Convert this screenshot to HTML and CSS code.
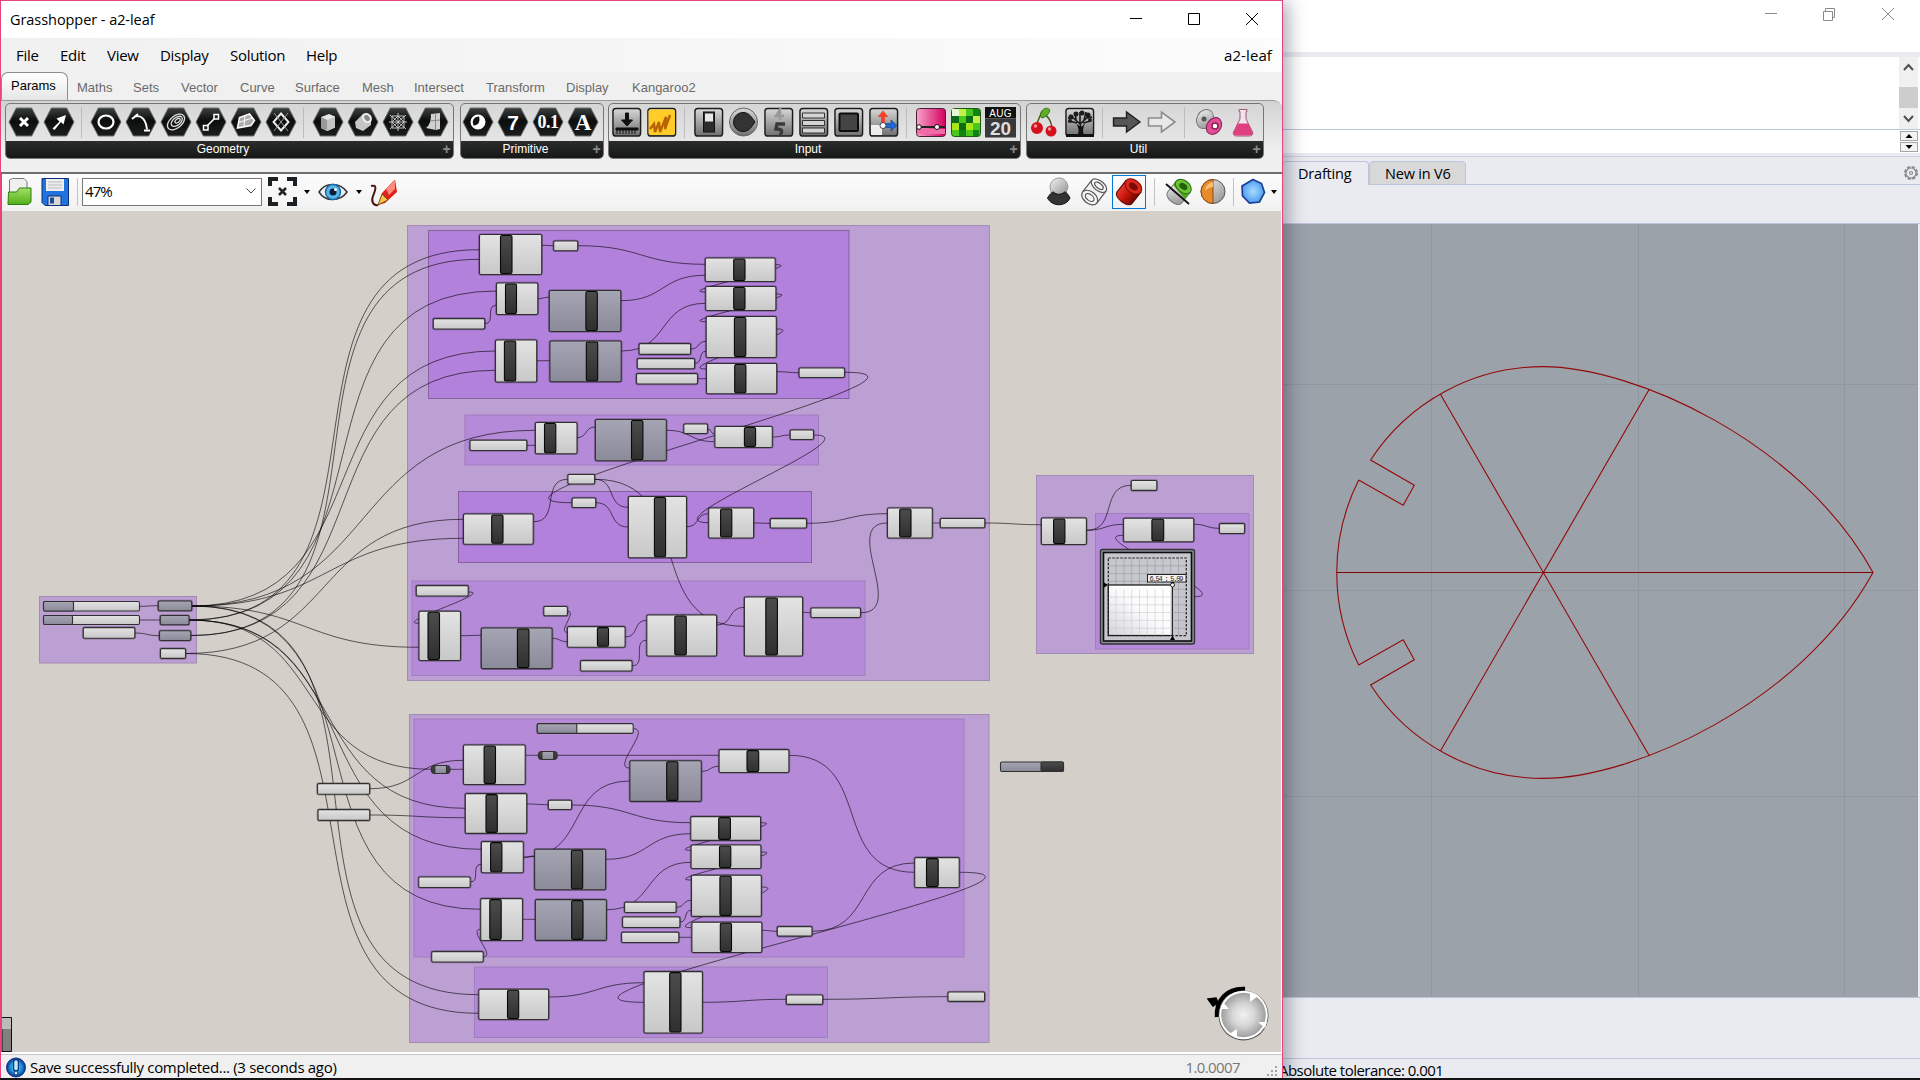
FILE: index.html
```html
<!DOCTYPE html>
<html lang="en">
<head>
<meta charset="utf-8">
<title>Grasshopper - a2-leaf</title>
<link rel="stylesheet" href="styles.css">
</head>
<body>
<svg class="defs" width="0" height="0" aria-hidden="true">
  <defs>
    <linearGradient id="light" x1="0" y1="0" x2="0" y2="1"><stop offset="0" stop-color="#e3e3e3"/><stop offset="1" stop-color="#c8c8c8"/></linearGradient>
    <linearGradient id="gray" x1="0" y1="0" x2="0" y2="1"><stop offset="0" stop-color="#a6a5b4"/><stop offset="1" stop-color="#8b8a99"/></linearGradient>
    <linearGradient id="dark" x1="0" y1="0" x2="0" y2="1"><stop offset="0" stop-color="#4c4c4c"/><stop offset="1" stop-color="#2f2f2f"/></linearGradient>
    <linearGradient id="hexfill" x1="0" y1="0" x2="0" y2="1"><stop offset="0" stop-color="#3c4040"/><stop offset=".45" stop-color="#0c0d0d"/><stop offset="1" stop-color="#1c1e1e"/></linearGradient>
    <linearGradient id="tile" x1="0" y1="0" x2="0" y2="1"><stop offset="0" stop-color="#d8d8d8"/><stop offset="1" stop-color="#6f6f6f"/></linearGradient>
    <linearGradient id="pad" x1="0" y1="1" x2="1" y2="0"><stop offset="0" stop-color="#d4d4da"/><stop offset=".5" stop-color="#fbfbfc"/><stop offset="1" stop-color="#ffffff"/></linearGradient>
    <linearGradient id="steel" x1="0" y1="0" x2="1" y2="1"><stop offset="0" stop-color="#f4f4f4"/><stop offset="1" stop-color="#8d8d8d"/></linearGradient>
    <linearGradient id="magenta" x1="0" y1="0" x2="1" y2="0"><stop offset="0" stop-color="#f7a3cb"/><stop offset="1" stop-color="#d4005f"/></linearGradient>
    <linearGradient id="green" x1="0" y1="0" x2="0" y2="1"><stop offset="0" stop-color="#a5e066"/><stop offset="1" stop-color="#4fae1a"/></linearGradient>
    <linearGradient id="red" x1="0" y1="0" x2="1" y2="0"><stop offset="0" stop-color="#e43a2c"/><stop offset=".5" stop-color="#c61208"/><stop offset="1" stop-color="#6d0602"/></linearGradient>
    <radialGradient id="knob"><stop offset="0" stop-color="#f1f1f1"/><stop offset=".5" stop-color="#d6d6d6"/><stop offset="1" stop-color="#9f9f9f"/></radialGradient>
    <radialGradient id="gem"><stop offset="0" stop-color="#a9dcff"/><stop offset="1" stop-color="#4f9cf0"/></radialGradient>
    <radialGradient id="info"><stop offset="0" stop-color="#49d6f4"/><stop offset=".6" stop-color="#1f8fd8"/><stop offset="1" stop-color="#0c2f8e"/></radialGradient>
    <symbol id="hex" viewBox="0 0 32 30"><path d="M8.300 1h15.400L31 15l-7.300 14H8.300L1 15z" fill="url(#hexfill)" stroke="#6a6e6e"/></symbol>
    <symbol id="tilebox" viewBox="0 0 32 32"><rect x="1.500" y="1.500" width="28.500" height="28.500" rx="3" fill="url(#tile)" stroke="#1c1c1c" stroke-width="1.500"/></symbol>
  </defs>
</svg>

<div class="desktop">
  <section class="rhino">
    <header class="rhino-title">
      <svg width="160" height="28" fill="none" stroke="#8a8a8a"><path d="M5 13.500h12M63.500 11.500h9v9h-9zM65.500 11v-2.500h9v9H73M122 8l12 12M134 8l-12 12"/></svg>
    </header>
    <div class="rhino-history">
      <div class="scrollbar">
        <svg width="19" height="30" fill="none" stroke="#505050" stroke-width="2"><path d="M5 13l4.500-5 4.500 5"/></svg>
        <div class="thumb"></div>
        <svg width="19" height="21" fill="none" stroke="#505050" stroke-width="2"><path d="M5 8l4.500 5 4.500-5"/></svg>
      </div>
    </div>
    <div class="rhino-prompt">
      <div class="spin"><svg width="18" height="10"><path d="M8 2l3.500 4h-7z"/></svg><svg width="18" height="10"><path d="M8 6l3.500-4h-7z"/></svg></div>
    </div>
    <nav class="rhino-tabs">
      <span class="rtab rtab-on">Drafting</span><span class="rtab">New in V6</span>
      <svg class="gear" width="16" height="16" fill="none" stroke="#8b8b8b" stroke-width="1.200"><circle cx="8" cy="8" r="6" stroke-dasharray="3.200 1.500" stroke-width="2"/><circle cx="8" cy="8" r="5"/><circle cx="8" cy="8" r="1.500"/></svg>
    </nav>
    <div class="rhino-tools"></div>
    <div class="viewport">
      <svg width="636" height="773" viewBox="1283 224 636 773" fill="none">
        <path d="M1431.500 224v773M1638.500 224v773M1844.500 224v773M1283 384.500h636M1283 590.500h636M1283 796.500h636" stroke="#9097a0"/>
        <g stroke="#920a0a" stroke-width="1.100">
          <path d="M1440.400 394.300L1649.400 756M1649.400 389L1440.400 751"/>
          <path d="M1358.700 480l44.500 25.300 11.100-20-43.700-25.300A206 206 0 0 1 1543 366.600C1632 366.600 1800 440 1873 572.500C1800 705 1632 778.400 1543 778.400A206 206 0 0 1 1370.600 685l43.700-25.300-11.100-20-44.500 25.300A206 206 0 0 1 1358.700 480"/>
        </g>
        <path d="M1336.500 572.500h206" stroke="#7d0606"/><path d="M1542.500 572.500h330.500" stroke="#7d0606"/>
      </svg>
    </div>
    <div class="rhino-pane"></div>
    <footer class="rhino-status"><span>Absolute tolerance: 0.001</span></footer>
  </section>

  <section class="gh">
    <header class="gh-title"><span class="caption">Grasshopper - a2-leaf</span>
      <svg width="158" height="36" fill="none" stroke="#000"><path d="M6 17.500h12M64.500 12.500h11v11h-11zM122 12l12 12M134 12l-12 12"/></svg>
    </header>
    <nav class="menu"><span class="m1">File</span><span class="m2">Edit</span><span class="m3">View</span><span class="m4">Display</span><span class="m5">Solution</span><span>Help</span><span class="doc">a2-leaf</span></nav>
    <nav class="tabs"><span class="tab-on">Params</span><span class="t1">Maths</span><span class="t2">Sets</span><span class="t3">Vector</span><span class="t4">Curve</span><span class="t5">Surface</span><span class="t6">Mesh</span><span class="t7">Intersect</span><span class="t8">Transform</span><span class="t9">Display</span><span>Kangaroo2</span></nav>
    <div class="ribbon">
      <div class="panel p-geo"><div class="icons">
        <svg class="ic"><use href="#hex" width="32" height="30"/><path d="M12 11l8 8M20 11l-8 8" stroke="#fff" stroke-width="3"/></svg>
        <svg class="ic"><use href="#hex" width="32" height="30"/><path d="M9.500 21.500l7-7-3-3L23 8l-2.500 9.500-2.500-2.500-6.500 8z" fill="#fff"/></svg>
        <i class="sep"></i>
        <svg class="ic"><use href="#hex" width="32" height="30"/><ellipse cx="16" cy="15" rx="7.500" ry="6.500" fill="none" stroke="#fff" stroke-width="2.200"/></svg>
        <svg class="ic"><use href="#hex" width="32" height="30"/><path d="M10 9.500c7-2 11 4 12 13" fill="none" stroke="#fff" stroke-width="1.900"/><path d="M7 12l6-5M19 23.500h6" stroke="#fff" stroke-width="1.900"/></svg>
        <svg class="ic"><use href="#hex" width="32" height="30"/><g fill="none" stroke="#ddd" stroke-width="1.300" transform="rotate(-40 16 15)"><ellipse cx="16" cy="15" rx="10" ry="6"/><ellipse cx="17" cy="15" rx="6.500" ry="3.800"/><ellipse cx="18" cy="15" rx="3" ry="1.700"/></g></svg>
        <svg class="ic"><use href="#hex" width="32" height="30"/><path d="M11 20L21 10" stroke="#fff" stroke-width="1.600"/><path d="M8.500 18.500h4.500v4.500H8.500zM19 7.500h4.500v4.500h-4.500z" fill="#222" stroke="#fff" stroke-width="1.500"/></svg>
        <svg class="ic"><use href="#hex" width="32" height="30"/><path d="M7.500 21l2-10.500 10-3.500 5 6.500-3.500 5z" fill="#aaa" stroke="#fff" stroke-width="1.500"/><path d="M9 15.500l13-4.500M15 9l-1 10" stroke="#fff"/></svg>
        <svg class="ic"><use href="#hex" width="32" height="30"/><path d="M16 6.500l7.500 8.500-7.500 8.500L8.500 15z" fill="none" stroke="#eee" stroke-width="1.900"/><path d="M9 6l14 18M23 6L9 24" stroke="#999"/></svg>
        <i class="sep"></i>
        <svg class="ic"><use href="#hex" width="32" height="30"/><path d="M9 10l8-3 6 2.500v11L15 24l-6-3z" fill="#e6e6e6"/><path d="M9 10l6.500 3v11l-6.500-3z" fill="#999"/><path d="M15.500 13l7.500-3.500v11L15.500 24z" fill="#c4c4c4"/></svg>
        <svg class="ic"><use href="#hex" width="32" height="30"/><path d="M8 15l8-8 8 5v6l-8 6-7-3z" fill="#c6c6c6"/><ellipse cx="20" cy="11" rx="4.500" ry="5.500" fill="#eee" transform="rotate(-40 20 11)"/><ellipse cx="20" cy="11" rx="2.500" ry="3.300" fill="#888" transform="rotate(-40 20 11)"/></svg>
        <svg class="ic"><use href="#hex" width="32" height="30"/><path d="M8 8l16 14M24 8L8 22M16 6v18M7 15h18M10 9h12v12H10zM16 9l6 6-6 6-6-6z" fill="none" stroke="#c4c4c4"/></svg>
        <svg class="ic"><use href="#hex" width="32" height="30"/><path d="M14 7l9-1v16l-4 1-10-2c4-3 5-8 5-14z" fill="#d0d0d0"/><path d="M18.500 6.500V23M13 14l10-1" stroke="#888"/></svg>
      </div><div class="plabel"><span>Geometry</span><b>+</b></div></div>
      <div class="panel p-prim"><div class="icons">
        <svg class="ic"><use href="#hex" width="32" height="30"/><circle cx="16" cy="15" r="6.500" fill="#fff" stroke="#fff" stroke-width="2"/><path d="M17 9.500a6 6 0 0 0-5.500 9c5 0 7-4 5.500-9z" fill="#111"/></svg>
        <svg class="ic"><use href="#hex" width="32" height="30"/><text x="16" y="22.500" class="glyph g7">7</text></svg>
        <svg class="ic"><use href="#hex" width="32" height="30"/><text x="16" y="21" class="glyph g01">0.1</text></svg>
        <svg class="ic"><use href="#hex" width="32" height="30"/><text x="16" y="22.500" class="glyph gA">A</text></svg>
      </div><div class="plabel"><span>Primitive</span><b>+</b></div></div>
      <div class="panel p-input"><div class="icons">
        <svg class="ic"><use href="#tilebox" width="32" height="31"/><path d="M14.500 6h3v7h4L16 19l-5.500-6h4zM5 21h22v2H5zM6 23v4M9 23v4M12 23v4M15 23v4M18 23v4M21 23v4M24 23v4" fill="#111" stroke="#111"/></svg>
        <svg class="ic"><use href="#tilebox" width="32" height="31"/><rect x="2.500" y="2.500" width="26.500" height="25.500" rx="2" fill="#ffcc2a"/><path d="M4 22l4-5 1 8 4-10 1 10 6-15-1 12 5-14" fill="none" stroke="#b86200" stroke-width="2.400"/></svg>
        <i class="sep"></i>
        <svg class="ic"><use href="#tilebox" width="32" height="31"/><rect x="10.500" y="5" width="11" height="20" fill="#2c2c2c" stroke="#111"/><rect x="12" y="6.500" width="8" height="8" fill="#e8e8e8"/></svg>
        <svg class="ic"><circle cx="15.500" cy="15" r="14" fill="url(#tile)" stroke="#666"/><path d="M15 5.500c6 0 8 4 12 9.500-4 5.500-6 9.500-12 9.500a9.500 9.500 0 0 1 0-19z" fill="#333" stroke="#111"/></svg>
        <svg class="ic"><use href="#tilebox" width="32" height="31"/><path d="M18 1l-5 8h8M17 4v9" fill="none" stroke="#999" stroke-width="2.500"/><path d="M22 17h-8l-1 5c6 0 7 1 4 7" fill="none" stroke="#3a3a3a" stroke-width="3.400"/></svg>
        <svg class="ic"><use href="#tilebox" width="32" height="31"/><path d="M4.500 6h22v5h-22zM4.500 13.500h22v5h-22zM4.500 21h22v5h-22z" fill="#d4d4d4" stroke="#333"/></svg>
        <svg class="ic"><use href="#tilebox" width="32" height="31"/><rect x="6.500" y="6.500" width="18.500" height="17.500" rx="1" fill="#444" stroke="#0c0c0c" stroke-width="2"/></svg>
        <svg class="ic"><use href="#tilebox" width="32" height="31"/><path d="M3 18h11v10H3z" fill="#eee"/><path d="M13 17V10H9.500L15 3.500 20.500 10H17v7z" fill="#f0442c"/><path d="M16 16.500h7V13l6 5.500-6 5.500v-3.500h-7z" fill="#1c68d4" stroke="#113c88" stroke-width=".6"/><circle cx="15" cy="18.500" r="3" fill="#fff" stroke="#444"/></svg>
        <i class="sep"></i>
        <svg class="ic"><rect x="1.500" y="1.500" width="29" height="28" rx="3" fill="url(#magenta)" stroke="#4a2038"/><path d="M2 20h28" stroke="#222" stroke-width="2"/><path d="M2 22h28v5H2z" fill="#f06aa8"/><circle cx="4" cy="20" r="2.300" fill="#fff" stroke="#111"/><circle cx="22" cy="20" r="2.500" fill="#fff" stroke="#111"/></svg>
        <svg class="ic"><rect x="1.500" y="1.500" width="29" height="28" rx="3" fill="#49c81c" stroke="#1d5a10"/><path d="M2 9h7v7H2zM16 9h7v7h-7zM9 16h7v7H9z" fill="#0b6b16"/><path d="M9 2h7v7H9zM23 9h7v7h-7z" fill="#c4f04a"/><path d="M16 16h7v7h-7zM2 16h7v7H2z" fill="#a6e813"/><path d="M23 2h7v7h-7zM23 23h6v6h-6zM9 23h7v6H9z" fill="#118312"/><path d="M2 2h7v7H2z" fill="#e6f7d4"/></svg>
        <svg class="ic"><rect x="0" y="0" width="31" height="11.500" fill="#111"/><rect x="0" y="11.500" width="31" height="19" fill="#393939"/><text x="15.500" y="9.500" class="glyph gaug">AUG</text><text x="15.500" y="27.800" class="glyph g20">20</text></svg>
      </div><div class="plabel"><span>Input</span><b>+</b></div></div>
      <div class="panel p-util"><div class="icons">
        <svg class="ic"><path d="M13 4c-2 6-4 9-6 15M13 4c4 5 9 7 10 17" fill="none" stroke="#4a5a1a" stroke-width="1.500"/><path d="M13 4c2-4 7-3 8-1-1 4-4 7-8 8-3-2-1-5 0-7z" fill="#5fae28" stroke="#2d6a10" stroke-width=".8"/><circle cx="8" cy="21" r="6" fill="#d5121c"/><circle cx="22" cy="24" r="5.500" fill="#d5121c"/><circle cx="6.500" cy="19" r="1.800" fill="#ff8f8f"/><circle cx="20.500" cy="22" r="1.700" fill="#ff8f8f"/></svg>
        <svg class="ic"><use href="#tilebox" width="32" height="31"/><path d="M13.500 29c2-5 1-8-1-12l3 2 1-4 1 5 4-4c-3 5-3 9-1 13z" fill="#111"/><path d="M16 17L6 8M16 17l10-9M16 17V5M13 16l-8-2M19 16l8-2M12 13l-1-8M20 13l2-8M9 11l-5 0M23 11l5-1" stroke="#1a1a1a" stroke-width="1.600"/><g fill="#1d1d1d"><circle cx="7" cy="10" r="2.500"/><circle cx="12" cy="7" r="2.500"/><circle cx="18" cy="6" r="2.500"/><circle cx="24" cy="8" r="2.500"/><circle cx="26" cy="13" r="2"/><circle cx="6" cy="14" r="2"/></g><path d="M2 27h28v3H2z" fill="#111"/></svg>
        <i class="sep"></i>
        <svg class="ic"><path d="M2.500 11h13V5L29 15 15.500 25v-6h-13z" fill="#565656" stroke="#222" stroke-width="1.400"/></svg>
        <svg class="ic"><path d="M2.500 11h13V5L29 15 15.500 25v-6h-13z" fill="#e8e8e8" stroke="#8b8b8b" stroke-width="1.600"/></svg>
        <i class="sep"></i>
        <svg class="ic"><ellipse cx="12" cy="12" rx="8" ry="10" fill="url(#steel)" stroke="#777" transform="rotate(30 12 12)"/><circle cx="11" cy="12" r="2.500" fill="#555"/><ellipse cx="21" cy="19" rx="7" ry="9" fill="#e24b96" stroke="#86204f" transform="rotate(35 21 19)"/><circle cx="22" cy="19" r="3" fill="#fff" stroke="#86204f" stroke-width="1.500"/></svg>
        <svg class="ic"><path d="M11 2.500h8v2h-1V12l6.500 13c1 3-1 4-3 4h-13c-2 0-4-1-3-4L12 12V4.500h-1z" fill="#f3e4ec" stroke="#9b5878"/><path d="M9.500 16.500h11l4 9c.500 2-1 3-2.500 3H8c-1.500 0-3-1-2.500-3z" fill="#e0407f"/></svg>
      </div><div class="plabel"><span>Util</span><b>+</b></div></div>
    </div>
    <div class="toolbar">
      <svg class="tl-open" width="26" height="30"><path d="M2.500 3l3-1.500H17l3 3V17H2.500z" fill="#f0f0f0" stroke="#777"/><path d="M1 27.500L1.500 15h8l3-4h11.500v14l-3 2.500z" fill="url(#green)" stroke="#2f7a12"/></svg>
      <svg class="tl-save" width="28" height="30"><path d="M1 1.500h26.500v27H4l-3-3z" fill="#1e74dc" stroke="#0d2f7a"/><path d="M5 2h18v12H5z" fill="#eee"/><path d="M7 5h14M7 8h14M7 11h14" stroke="#bbb"/><path d="M7 19h13v9.500H7z" fill="#d7d7d7" stroke="#0d2f7a"/><path d="M9 20.500h4v6H9z" fill="#1b4c9c"/></svg>
      <i class="tsep ts1"></i>
      <div class="combo"><span>47%</span><svg width="12" height="10" fill="none" stroke="#444"><path d="M1.500 2.500L6 7l4.500-4.500"/></svg></div>
      <svg class="tl-ext" width="29" height="29"><path d="M2 9V2h8M19 2h8v7M27 20v7h-8M10 27H2v-7" fill="none" stroke="#1b2023" stroke-width="4"/><path d="M11 11l7 7M18 11l-7 7" stroke="#222" stroke-width="2.500"/></svg>
      <svg class="tl-a1" width="6" height="4"><path d="M0 0h6L3 4z"/></svg>
      <svg class="tl-eye" width="30" height="22"><path d="M1 11C7 1 22 1 29 11 22 21 7 21 1 11z" fill="#e9f1f5" stroke="#333" stroke-width="1.500"/><circle cx="15" cy="11" r="7.500" fill="#58b5ea" stroke="#1b6aa8" stroke-width="1.500"/><circle cx="15" cy="11" r="3.500" fill="#0c1c3c"/><circle cx="17.500" cy="8.500" r="1.500" fill="#fff"/></svg>
      <svg class="tl-a2" width="6" height="4"><path d="M0 0h6L3 4z"/></svg>
      <svg class="tl-pen" width="30" height="30"><path d="M2 9c7-2 4 5 2 10s0 10 5 9" fill="none" stroke="#4a1712" stroke-width="2"/><path d="M9 28l4-12L26 2.500l2 12.500-12 11z" fill="#e2231c"/><path d="M17 12l9-9 0 9-6 6z" fill="#ff8a7d"/><path d="M9 28l4-11 6 6z" fill="#f1c64a" stroke="#6b3a08" stroke-width=".8"/></svg>
      <div class="push"></div>
      <svg class="tr" width="30" height="30"><path d="M6 10c1-12 17-12 18 0l-3 9H8z" fill="url(#steel)" stroke="#999"/><path d="M3.500 21c3-5 5-6 6-6 3 3 8 3 11 0 2 0 4 3 5.500 6-4 9-18 9-22.500 0z" fill="#333" stroke="#111"/></svg>
      <svg class="tr" width="34" height="30"><g transform="rotate(38 17 15)" fill="#f4f4f4" stroke="#555" stroke-width="1.200"><path d="M8 8h18v14H8z" stroke="none"/><path d="M8 7v15M26 7v15"/><ellipse cx="17" cy="7" rx="9" ry="5"/><ellipse cx="17" cy="7" rx="5" ry="2.500"/><ellipse cx="17" cy="22" rx="9" ry="6"/><ellipse cx="17" cy="22" rx="5" ry="3"/></g></svg>
      <div class="picked"><svg width="32" height="32"><g transform="rotate(38 16 16)"><path d="M6.500 9v14c0 7 19 7 19 0V9z" fill="url(#red)" stroke="#5f0702"/><ellipse cx="16" cy="9" rx="9.500" ry="6.500" fill="#d9281d" stroke="#7d0a04"/><ellipse cx="16" cy="9" rx="5" ry="3.300" fill="#7d0a04"/></g></svg></div>
      <i class="tsep ts2"></i>
      <svg class="tr tr-g" width="32" height="30"><g transform="rotate(38 16 15)"><path d="M7 8v14c0 7 18 7 18 0V8z" fill="url(#steel)" stroke="#777"/><path d="M7 8v5l18 4V8z" fill="#4aa51c"/><ellipse cx="16" cy="8" rx="9" ry="6" fill="#69c433" stroke="#2a6d0b"/><ellipse cx="16" cy="8" rx="4.500" ry="3" fill="#255f0a"/></g><path d="M3 7l23 20" stroke="#111" stroke-width="1.800"/></svg>
      <svg class="tr tr-o" width="28" height="30"><circle cx="14" cy="14.500" r="12" fill="url(#steel)" stroke="#555"/><path d="M14 2.500a12 12 0 0 0 0 24z" fill="#e8892a" stroke="#8f4a08"/><path d="M14 5a9 9 0 0 0-8 9c3-3 5-4 8-4z" fill="#f8c07c"/></svg>
      <i class="tsep ts3"></i>
      <svg class="tr tr-b" width="26" height="28"><path d="M13 1.500l8.500 4 3 9-5 9.500-10 1L2.500 18 2 8z" fill="url(#gem)" stroke="#1c3f94" stroke-width="1.700"/></svg>
      <svg class="tl-a3" width="6" height="4"><path d="M0 0h6L3 4z"/></svg>
    </div>
    <div class="canvas">
      <svg id="graph" width="1278" height="841" viewBox="2 211 1278 841">
        <g id="groups"></g><g id="wires"></g><g id="nodes"></g>
        <g class="slider2d">
          <rect x="1100.500" y="549.500" width="94" height="94.500" rx="2" fill="#8f8e9c" stroke="#333" stroke-width="1.400"/>
          <rect x="1103.500" y="552.500" width="88" height="88.500" fill="#c6c6cd" stroke="#0c0c0c" stroke-width="1.600"/>
          <path id="grid" stroke="#a3a3ac" stroke-width=".8"/>
          <rect x="1108.300" y="585" width="64" height="50.500" fill="url(#pad)" stroke="#111" stroke-width="1.200"/>
          <path id="grid2" stroke="#c9c9d2" stroke-width=".6"/>
          <rect x="1108.300" y="558" width="78" height="77.600" fill="none" stroke="#222" stroke-width="1.200" stroke-dasharray="2.500 1.500"/>
          <path d="M1104 582.500l4 2.500-4 2.500zM1170 640l2.500-4.500 2.500 4.500zM1170 581l2.500 4 2.500-4z" fill="#000"/>
          <rect x="1147.500" y="574.500" width="38.500" height="7.500" fill="#f2f2f2" stroke="#222"/>
          <text x="1149.500" y="580.600" class="coord" textLength="34">6.54 ; 5.09</text>
          <circle cx="1172.500" cy="585" r="2" fill="#fff" stroke="#222"/>
        </g>
        <path d="M2 1017.500h9.500v34H2z" fill="#808080" stroke="#111"/><path d="M2 1018h9v11H2z" fill="#bbb"/>
        <path d="M1217 1017c-1-17 10-29 28-28" fill="none" stroke="#000" stroke-width="4.500"/>
        <path d="M1208 999l8-1 2 5-5 3z" fill="#000" stroke="#000" stroke-width="1.500"/>
        <circle cx="1243.500" cy="1015.500" r="25" fill="#555"/><circle cx="1243.500" cy="1015" r="24.300" fill="#fff"/><circle cx="1243.500" cy="1015" r="22.300" fill="url(#knob)"/>
        <path d="M1250 992v10l8-6zM1223 1002l6 7-7 0zM1265 1028l-7-6h9zM1237 1037v-8l-8 5z" fill="#fff"/>
      </svg>
    </div>
    <footer class="gh-status">
      <svg width="20" height="21"><circle cx="10" cy="10.500" r="9.500" fill="url(#info)" stroke="#10317f"/><path d="M10 5v6.500" stroke="#10327a" stroke-width="6" stroke-linecap="round"/><path d="M10 5v6.500" stroke="#bfeaf6" stroke-width="3.500" stroke-linecap="round"/><circle cx="10" cy="16" r="2" fill="#bfeaf6" stroke="#10327a"/></svg>
      <span class="msg">Save successfully completed... (3 seconds ago)</span>
      <span class="ver">1.0.0007</span>
      <svg class="grip" width="12" height="12" fill="#a5a5a5"><path d="M8 0h2v2H8zM4 4h2v2H4zM8 4h2v2H8zM0 8h2v2H0zM4 8h2v2H4zM8 8h2v2H8z"/></svg>
    </footer>
  </section>
  <div class="taskbar"></div>
</div>
<script src="graph.js"></script>
</body>
</html>
```
FILE: styles.css
```css
* { box-sizing: border-box; }
body { margin: 0; width: 1920px; height: 1080px; overflow: hidden; background: #e9ebf0; color: #000; font-family: "Open Sans", "Noto Sans", sans-serif; font-size: 15px; }
svg { display: block; flex: none; }
.defs { position: absolute; }
.desktop { display: grid; grid-template-columns: 1283px 637px; grid-template-rows: 1078px 2px; height: 1080px; }
.rhino { grid-column: 2; grid-row: 1; display: flex; flex-direction: column; background: #e9ebf0; }
.gh { grid-column: 1; grid-row: 1; display: flex; flex-direction: column; border: 1px solid #e8447c; border-bottom: 0; background: #f0f0f0; z-index: 1; box-shadow: 4px 2px 18px rgba(20,20,50,.4); }
.taskbar { grid-column: 1 / 3; grid-row: 2; background: #141414; z-index: 2; }

/* Rhino window */
.rhino-title { height: 52px; background: #fff; display: flex; justify-content: flex-end; }
.rhino-history { height: 78px; border-top: 5px solid #e9ebf0; border-bottom: 1px solid #bdc5da; background: #fff; display: flex; justify-content: flex-end; padding-right: 2px; }
.scrollbar { width: 19px; background: #f0f0f0; }
.thumb { height: 21px; background: #cdcdcd; }
.rhino-prompt { height: 23px; background: #fff; display: flex; justify-content: flex-end; padding: 1px 2px 0 0; }
.spin { display: flex; flex-direction: column; gap: 1px; }
.spin svg { border: 1px solid #a5a5a5; background: #f3f3f3; }
.rhino-tabs { height: 32px; display: flex; align-items: flex-end; border-top: 3px solid #e9ebf0; box-shadow: inset 0 1px #cdd3e2, inset 0 -1px #bdc5da; }
.rtab { height: 24px; width: 97px; padding-left: 15px; font-size: 14.500px; letter-spacing: -.2px; line-height: 23px; background: #d8d8d8; border: 1px solid #bdc5da; border-radius: 4px 4px 0 0; white-space: nowrap; }
.rtab-on { width: 86px; background: #e9ebf0; border-bottom-color: #e9ebf0; border-left: 0; }
.gear { margin: 0 1px 4px auto; }
.rhino-tools { height: 39px; border-bottom: 1px solid #bdc5da; }
.viewport { height: 773px; width: 635px; background: #9ca2aa; overflow: hidden; }
.rhino-pane { height: 62px; border-top: 1px solid #bdc5da; border-bottom: 1px solid #bdc5da; }
.rhino-status { flex: 1; line-height: 23px; height: 19px; white-space: nowrap; letter-spacing: -.52px; }
.rhino-status span { margin-left: -4px; }

/* Grasshopper window */
.gh-title { height: 37px; background: #fff; display: flex; justify-content: space-between; align-items: flex-start; }
.caption { padding-left: 9px; line-height: 37px; font-size: 14.500px; letter-spacing: -.06px; }
.menu { height: 34px; display: flex; line-height: 35px; padding: 0 10px 0 15px; letter-spacing: -.3px; background: linear-gradient(90deg, #f0f0f0, #fcfcfc); }
.m1 { width: 44px; } .m2 { width: 47px; } .m3 { width: 53px; } .m4 { width: 70px; } .m5 { width: 76px; }
.doc { margin-left: auto; letter-spacing: .1px; }
.tabs { height: 28px; display: flex; align-items: flex-end; font: 13px "Liberation Sans", Arial, sans-serif; color: #6a6a6a; line-height: 24px; }
.tab-on { width: 67px; height: 28px; margin-right: 9px; padding-left: 9px; color: #000; line-height: 26px; background: linear-gradient(#fff, #e6e6e6); border: 1px solid #8d8d8d; border-bottom: 0; border-radius: 7px 7px 0 0; }
.t1 { width: 56px; } .t2 { width: 48px; } .t3 { width: 59px; } .t4 { width: 55px; } .t5 { width: 67px; } .t6 { width: 52px; } .t7 { width: 72px; } .t8 { width: 80px; } .t9 { width: 66px; }
.ribbon { height: 74px; padding: 2px 0 0 4px; display: flex; align-items: flex-start; border-top: 1px solid #9a9a9a; border-bottom: 2px solid #6f6f6f; border-top-right-radius: 9px; background: linear-gradient(#d3d3d3, #efefef 70%); }
.panel { height: 56px; border: 1px solid #777; border-radius: 5px; background: linear-gradient(#d6d6d6, #ececec); overflow: hidden; }
.p-geo { width: 449px; margin-right: 6px; } .p-prim { width: 144px; margin-right: 4px; } .p-input { width: 413px; margin-right: 5px; } .p-util { width: 238px; }
.icons { height: 37px; padding: 3px 0 0 1px; display: flex; }
.ic { width: 32px; height: 31px; margin-right: 3px; }
.ic:first-child { margin-left: 1px; }
.p-prim .ic:first-child { margin-left: 0; }
.sep { width: 1px; height: 31px; margin: 0 8px 0 3px; background: #bdbdbd; }
.plabel { height: 18px; display: flex; background: linear-gradient(#2b2d2d, #151616); color: #fff; font: 12px/16px "Liberation Sans", Arial, sans-serif; text-align: center; }
.plabel span { flex: 1; }
.plabel b { color: #8b8b8b; width: 13px; font-size: 14px; }
.glyph { fill: #fff; text-anchor: middle; font-weight: bold; font-family: "Liberation Serif", serif; }
.g7 { font-size: 21px; font-family: "Liberation Sans", sans-serif; } .g01 { font-size: 18px; letter-spacing: -.5px; } .gA { font-size: 23px; }
.gaug { font: 10px "Liberation Sans", sans-serif; letter-spacing: .3px; } .g20 { font: bold 19px "Liberation Sans", sans-serif; fill: #ddd; }
.toolbar { height: 37px; display: flex; align-items: center; padding: 0 0 2px 5px; background: linear-gradient(#fcfcfc, #f1f1f1); border-left: 1px solid #777; }
.tl-save { margin-left: 8px; } .tsep { width: 1px; height: 28px; background: #c2c2c2; } .ts1 { margin: 0 4px 0 8px; }
.combo { width: 180px; height: 28px; border: 1px solid #777; background: #fff; display: flex; align-items: center; justify-content: space-between; padding: 0 4px 1px 2px; letter-spacing: -.9px; }
.tl-ext { margin-left: 6px; } .tl-a1 { margin-left: 7px; } .tl-eye { margin-left: 8px; } .tl-a2 { margin-left: 8px; } .tl-pen { margin-left: 7px; }
.push { flex: 1; }
.picked { width: 34px; height: 34px; border: 1px solid #0078d7; margin-left: 1px; }
.tr { margin-left: 3px; }
.ts2 { margin: 0 5px 0 8px; } .tr-o { margin-left: 4px; } .ts3 { margin: 0 3px 0 6px; } .tl-a3 { margin: 0 5px 0 5px; }
.canvas { height: 841px; background: #d4cfc8; border-left: 1px solid #777; border-right: 1px solid #f8f8f8; overflow: hidden; }
.gh-status { flex: 1; display: flex; align-items: center; border-top: 2px solid #fff; box-shadow: inset 0 1px #c8c8c8; padding: 2px 3px 0 5px; white-space: nowrap; }
.msg { margin-left: 4px; letter-spacing: -.32px; }
.ver { margin-left: auto; margin-right: 27px; color: #777; letter-spacing: -.6px; }
.grip { margin-top: 10px; }

/* Node graph */
.coord { font: 7px "Liberation Mono", monospace; fill: #222; }
.wire { fill: none; stroke: #000; stroke-opacity: .6; stroke-width: 1; }
.g-outer { fill: #bda0d3; stroke: #a28bb4; } .g-strong { fill: #b281db; stroke: #87609f; } .g-mid { fill: #b58bd9; stroke: #a17cbf; }
.halo { fill: none; stroke: #000; stroke-opacity: .28; stroke-width: 2.600; }
.box { stroke: #303030; stroke-width: 1.100; } .core { fill: url(#dark); stroke: #080808; stroke-width: 1.100; }
```
FILE: graph.js
```js
const NS = 'http://www.w3.org/2000/svg';
const add = (parent, tag, attrs) => {
  const el = document.createElementNS(NS, tag);
  for (const k in attrs) el.setAttribute(k, attrs[k]);
  document.getElementById(parent).appendChild(el);
};
const rect = (parent, x, y, r, b, cls, fill, rx) => {
  const a = { x, y, width: r - x, height: b - y, class: cls, rx: rx || 0 };
  if (fill) a.fill = `url(#${fill})`;
  add(parent, 'rect', a);
};

// left, top, right, bottom, style
const groups = [
  [407.5,225.5,989.5,680.5,'outer'],[428.5,230.5,849,398.5,'strong'],[465,415,818.500,465,'mid'],
  [458.5,491.5,811.5,562.5,'strong'],[412,581,865,675.500,'mid'],[39.5,596.5,196.5,663,'outer'],
  [409.5,714.5,989,1042.5,'outer'],[414,719,964,957,'mid'],[474.5,967,827.5,1037.5,'mid'],
  [1036.5,475.5,1253.5,653.5,'outer'],[1095.5,513.5,1249,649,'mid']
];
groups.forEach(g => rect('groups', g[0], g[1], g[2], g[3], 'g-' + g[4]));

// left, top, right, bottom, core left, core right, fill
const nodes = [
  [479.5,234.500,541.700,274.500,500.500,512],[496.500,283,537.800,314.500,505.500,516.500],[549.300,290.500,620.800,331.500,585.900,597.300,'gray'],
  [495.500,340,536.700,382,504.400,515.700],[549.900,341,621.200,381.700,586.300,597.700,'gray'],[705.300,258,775.200,281.500,733.700,745],
  [705.700,286.500,775.900,310.500,733.700,745],[706.200,316.500,776.300,357.500,734.400,745.800],[706.500,363.500,776.700,393.700,734.700,745.900],
  [535.400,422.500,577,453.700,544.500,555.800],[595.400,419.500,666.300,460.700,631.500,642.900,'gray'],[714.900,426.500,772.300,447.500,744.400,755.600],
  [463.500,514,533.200,544.300,491.700,503],[628.400,496.500,686.500,557.700,654.400,665.600],[708.700,508,753.600,538,720.600,731.800],
  [887.500,308 + 200,932.300,538,899.700,911],[419,611.300,460.500,660.500,428,439.500],[481.300,628,552.100,668.600,517.400,528.900,'gray'],
  [567.500,626.600,625.100,647.300,597.400,608.500],[646.800,615,716.600,656,674.800,686.300],[744.400,597,802.600,656,765.800,777.400],
  [463.500,745,525.200,784.500,484.100,495.500],[465.300,793.600,526.700,833.400,486,497.300],[629.900,760.700,701.300,801.400,666.700,677.900,'gray'],
  [719.100,749.600,788.900,772.500,747,758.700],[690.800,816.600,760.600,840.400,718.700,730.400],[691.100,845,760.900,868.500,719.500,730.800],
  [691.500,875.200,761.300,916.400,719.900,731.200],[691.900,922.200,761.800,952.500,720.300,731.500],[481.400,841.600,523.300,872.700,490.600,501.900],
  [534.600,849.300,605.600,889.700,571.400,582.700,'gray'],[480.700,898.600,522.500,940.500,489.800,501.200],[535.400,899.600,606.400,940.400,571.700,583,'gray'],
  [914.700,857.600,959.200,887.500,926.500,938.200],[478.800,989.300,548.600,1019.500,507.500,518.700],[644.100,971.600,702.400,1033,669.700,681],
  [1041.400,518,1086.400,544.500,1053.600,1064.900],[1123.600,518.300,1193.700,541.700,1151.900,1163.700]
];

// left, top, right, bottom, fill
const params = [
  [553.700,241,577.700,250.700],[433.300,318.600,484.700,329],[639.100,343.600,690.600,354.400],[637.300,358.600,694.600,368.700],[636.500,373.600,697.500,384],
  [799.100,368,844.500,377.500],[470,440.300,526.800,450.500],[683.800,424,707.500,433.500],[790.200,430,813.500,439.500],[567.900,474.500,594.600,484],
  [572.100,498,595.700,507.500],[770.300,518.600,806.500,528],[940.300,518.500,984.800,527.800],[416.300,585.600,468.200,596],[543.800,606.500,567.400,615.800],
  [580.600,660.600,632,671],[810.900,608,860.500,617.500],[83.300,627.600,134.800,638.200],[158.300,601,191.700,610.700,'gray'],[160.300,615.500,189,624.700,'gray'],
  [159.500,630.700,190.700,640.500,'gray'],[160.500,648.600,185.500,658.400],[317.500,783.600,369.600,794.200],[318,809.600,369.700,820.400],
  [548.400,800.300,571.600,809.500],[418.700,877,470.200,887.500],[624.600,902.300,676.100,912.500],[622.600,917,679.900,927.500],[621.600,932.300,678.800,942.500],
  [777.300,926.600,812,936.100],[431.700,951.600,483.200,962],[786.400,995,822.700,1004.400],[948,992,984.600,1001.400],[1131.300,480.500,1156.800,490.400],
  [1219.500,523.600,1244.500,533.500]
];

// output x, y -> input x, y
const wires = [
  [189,620,479,249.700],[191,635.500,479,259.300],[189,620,496,291],[192,606,495,351],[191,635.500,495,370.300],
  [192,606,535,430.300],[192,606,463,538.300],[186,653.500,463,519.300],[192,606,419,647.300],
  [189,620,431,769.300],[189,620,465,808.300],[189,620,481,849.300],[192,606,480.400,909.300],[192,606,478.500,994.700],[186,653.500,478.500,1013.300],
  [369.700,788.700,463,760.300],[369.700,815,465,817.700],[139.700,606.300,158,605.700],[139.700,620,160,620],[135,633,159,635.700],
  [542,245.300,553,245.700],[578,245.700,705,264.300],[538,298.700,549,297.300],[621,300.700,705,275.300],[485,323.700,496,305.300],
  [537,360.700,550,360.700],[621.600,351,705.400,303.300],[775.400,264.700,705.400,292],[776.200,294,705.800,321.700],[776.600,329,706.200,369],
  [691,349,706,341.300],[695,363.300,706,351.300],[698,378.700,706,378.700],[777,371.700,799,372.700],[844.700,372.300,571.800,502.700],
  [527,445.300,535,445.300],[577,437.700,595,427],[666.700,430.300,714.600,441.700],[707.700,429,714.600,434],[772.700,437,790,435],
  [813.700,435,708.500,522.700],[687,526.700,708.500,513.700],[533.600,521.700,567.600,479.300],[594.800,479.300,628,507.300],[594.800,479.300,744,626.300],
  [596,502.700,628,527],[754,523,770,523.300],[806.800,523.300,887.200,513.700],[860.800,612.700,887.200,523],[932.700,523,940,523],[985,523,1041,524.700],
  [468.500,592,418.800,623.300],[460.800,635.700,481,635.300],[552.300,638.300,567.200,641.700],[567.600,611.300,567.200,632.300],[625.400,637,646.500,620.300],
  [632.300,665.700,646.500,640.300],[716.900,625,744,607.300],[803,612.300,811,612.700],[633.400,728.700,629.600,768],[525.500,755.300,538,755.300],
  [557,755.300,718.800,755.300],[450,769.300,463,769.300],[523.600,857.300,534.300,856],[523.600,857.300,629.600,781],[701.600,771.300,718.800,766.300],
  [789.200,755.300,914.400,872.300],[527,804,548,804.700],[571.800,805,690.500,822.700],[605.900,859.300,690.500,833.700],[760.900,822.700,690.900,850.300],
  [761.300,852,691.200,880],[761.600,887,691.600,927.700],[606.700,909.700,690.900,862.300],[676.300,907.300,691.200,900.300],[680,922,691.200,910.300],
  [679,937.300,691.600,937.300],[762,930.300,777,931.300],[812.200,931.300,914.400,863],[959.500,872.300,643.800,1002.300],[548.900,997,643.800,982.700],
  [470.400,882,481,864.300],[522.800,919.300,535,919.300],[483.400,956.700,480.400,929.300],[702.700,1002.300,786,999.300],[822.900,999.300,947.700,996.700],
  [1086.700,530.300,1131,485.300],[1086.700,530.300,1123.300,524.300],[1194,524.300,1219.300,528.300],[1194.700,596.700,1123.300,535.300]
];
wires.forEach(([a, b, c, d]) => {
  const k = Math.hypot(c - a, d - b) * (c < a ? 0.465 : 0.5);
  add('wires', 'path', { d: `M${a} ${b}C${a + k} ${b} ${c - k} ${d} ${c} ${d}`, class: 'wire' });
});

nodes.forEach(n => {
  rect('nodes', n[0], n[1], n[2], n[3], 'halo', null, 2);
  rect('nodes', n[0], n[1], n[2], n[3], 'box', n[6] || 'light', 1.5);
  rect('nodes', n[4], n[1] + 1, n[5], n[3] - 1, 'core', null, 1.5);
});
params.forEach(p => {
  rect('nodes', p[0], p[1], p[2], p[3], 'halo', null, 1.5);
  rect('nodes', p[0], p[1], p[2], p[3], 'box', p[4] || 'light', 1.5);
});

// sliders: left, top, right, bottom, split
[[43.5,601.5,139.5,611,73.5],[43.5,615.5,139.5,624.5,72.5],[537.2,723.6,633.2,733.4,576.8]].forEach(s => {
  rect('nodes', s[0], s[1], s[2], s[3], 'box', 'light', 1.5);
  rect('nodes', s[0], s[1], s[4], s[3], 'box', 'gray', 1.5);
});
rect('nodes', 1000.5, 762, 1063.5, 771.5, 'box', 'gray', 1.5);
rect('nodes', 1041, 762, 1063.5, 771.5, 'box', 'dark', 1.5);

[[431.3,765.5,450,773.5],[538.4,751.5,557.2,759.5]].forEach(r => {
  rect('nodes', r[0], r[1], r[2], r[3], 'box', 'dark', 3.5);
  rect('nodes', r[0] + 3.5, r[1], r[2] - 3.5, r[3], 'box', 'gray', 1);
});

const lines = (x0, y0, x1, y1, step) => {
  let d = '';
  for (let x = x0 + step; x < x1 - 1; x += step) d += `M${x} ${y0}V${y1}`;
  for (let y = y0 + step; y < y1 - 1; y += step) d += `M${x0} ${y}H${x1}`;
  return d;
};
document.getElementById('grid').setAttribute('d', lines(1108.3, 558, 1186.3, 635.6, 7.8));
document.getElementById('grid2').setAttribute('d', lines(1108.3, 589.2, 1172.3, 635.6, 7.8));
```
